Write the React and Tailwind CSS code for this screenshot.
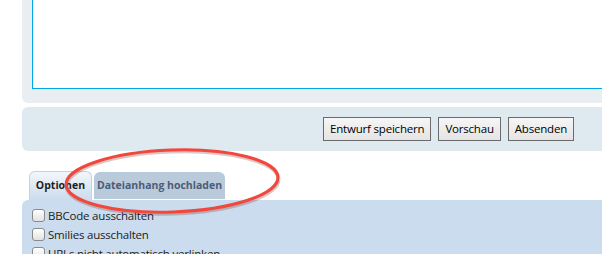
import React from 'react';

const font = { fontFamily: '"Open Sans", "DejaVu Sans", sans-serif' };

const Checkbox = () => (
    <span className="inline-block w-[13px] h-[13px] rounded-[3px] border border-[#8a8a8a] bg-gradient-to-b from-white to-[#e2e2e2] shadow-[inset_0_1px_0_#fff] shrink-0" />
);

const OptionRow = ({ label }) => (
    <label className="flex items-center gap-[3px] h-[19px] text-[11.5px] tracking-[-0.2px] text-[#222] whitespace-nowrap">
        <Checkbox />
        <span>{label}</span>
    </label>
);

const FormButton = ({ children }) => (
    <button className="h-[24px] px-[6px] border border-[#6b6b6b] bg-gradient-to-b from-[#f6f6f6] to-[#e4e4e4] text-[11.5px] tracking-[-0.2px] text-black leading-none whitespace-nowrap">
        {children}
    </button>
);

export default function App() {
    return (
        <div className="relative w-[602px] h-[254px] overflow-hidden bg-white" style={font}>
            <div className="w-[660px] pl-[22px]">
                {/* editor box */}
                <div className="h-[103px] bg-[#e9eef2] rounded-bl-[6px] pl-[10px]">
                    <div className="h-[89px] bg-white border-l border-b border-[#00a6e6]" />
                </div>

                {/* submit buttons */}
                <div className="mt-[4px] h-[44px] bg-[#dfe9f0] rounded-tl-[6px] rounded-bl-[6px] flex items-center justify-end gap-[7px] pr-[86px]">
                    <FormButton>Entwurf speichern</FormButton>
                    <FormButton>Vorschau</FormButton>
                    <FormButton>Absenden</FormButton>
                </div>

                {/* tabs */}
                <div className="mt-[20px] ml-[7px] flex items-end gap-[2px] h-[29px]">
                    <div className="h-[29px] w-[63px] rounded-t-[6px] border border-b-0 border-[#c3d3e3] bg-gradient-to-b from-[#f3f7fb] to-[#cadced] flex items-center justify-center text-[10.5px] font-bold text-[#1e1e1e] whitespace-nowrap">
                        Optionen
                    </div>
                    <div className="h-[27px] w-[131px] mb-[1px] rounded-t-[6px] bg-[#b9cadb] flex items-center justify-center text-[10.5px] font-bold text-[#4c5c78] whitespace-nowrap">
                        Dateianhang hochladen
                    </div>
                </div>

                {/* options panel */}
                <div className="h-[60px] bg-[#cadced] rounded-tl-[6px] pl-[10px] pt-[6px]">
                    <OptionRow label="BBCode ausschalten" />
                    <OptionRow label="Smilies ausschalten" />
                    <OptionRow label="URLs nicht automatisch verlinken" />
                </div>
            </div>

            {/* red highlight ellipse */}
            <svg className="absolute left-0 top-0 pointer-events-none" width="602" height="254">
                <ellipse cx="172" cy="181" rx="106" ry="31" fill="none" stroke="#7a1a14" strokeOpacity="0.25" strokeWidth="4" transform="rotate(-2 172 181) translate(0.5 1.5)" />
                <ellipse cx="172" cy="181" rx="106" ry="31" fill="none" stroke="#f2473d" strokeWidth="3" transform="rotate(-2 172 181)" />
            </svg>
        </div>
    );
}
